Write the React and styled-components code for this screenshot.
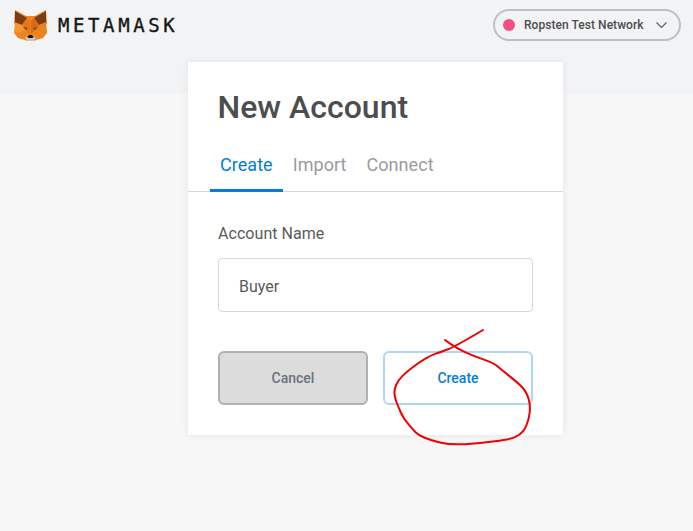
import React from "react";
import styled, { createGlobalStyle } from "styled-components";

const Global = createGlobalStyle`
  html, body { margin: 0; padding: 0; background: #f7f7f7; }
  body { font-family: Roboto, "Liberation Sans", sans-serif; }
  * { box-sizing: border-box; }
`;

const Page = styled.div`
  position: relative;
  width: 693px;
  height: 531px;
  overflow: hidden;
  background: #f7f7f7;
`;

const Header = styled.header`
  height: 94px;
  background: #f2f3f4;
  display: flex;
  align-items: flex-start;
  justify-content: space-between;
  padding: 9px 12px 0 14px;
`;

const Brand = styled.div`
  display: flex;
  align-items: center;
  gap: 11px;
  height: 32px;
`;

const Wordmark = styled.span`
  font-family: "DejaVu Sans Mono", monospace;
  font-size: 19px;
  letter-spacing: 3.6px;
  color: #161616;
  line-height: 1;
  -webkit-text-stroke: 0.35px #161616;
`;

const NetworkPill = styled.div`
  width: 188px;
  height: 32px;
  border: 2px solid #bbc0c5;
  border-radius: 16px;
  display: flex;
  align-items: center;
  padding: 0 12px 0 8px;
  color: #4d4d4d;
  font-size: 12px;
  letter-spacing: 0.05px;
  font-weight: 500;
`;

const Dot = styled.span`
  width: 12px;
  height: 12px;
  border-radius: 50%;
  background: ${(p) => p.$color};
  margin-right: 9px;
`;

const NetworkName = styled.span`
  flex: 1;
`;

const Main = styled.main`
  display: flex;
  margin-top: -32px;
  padding-left: 188px;
`;

const Card = styled.section`
  width: 375px;
  height: 373px;
  background: #fff;
  box-shadow: 0 0 7px rgba(0, 0, 0, 0.08);
  display: flex;
  flex-direction: column;
`;

const Title = styled.h1`
  margin: 0;
  padding: 27px 30px 0 29.5px;
  font-size: 32px;
  line-height: 36px;
  font-weight: 500;
  color: #4d4d4d;
`;

const Tabs = styled.nav`
  display: flex;
  padding: 0 22px;
  margin-top: 27px;
  height: 40px;
  border-bottom: 1px solid #d6d8da;
`;

const Tab = styled.div`
  padding: 0 10px;
  height: 40px;
  font-size: 18px;
  letter-spacing: 0.05px;
  line-height: 26px;
  color: ${(p) => (p.$active ? "#037dd6" : "#9b9b9b")};
  border-bottom: 3px solid ${(p) => (p.$active ? "#037dd6" : "transparent")};
`;

const Form = styled.form`
  display: flex;
  flex-direction: column;
  padding: 30px 30px 0;
`;

const Label = styled.label`
  font-size: 16px;
  letter-spacing: 0.05px;
  line-height: 24px;
  color: #5b5b5b;
`;

const NameField = styled.div`
  margin-top: 12px;
  height: 54px;
  border: 1px solid #d2d8dd;
  border-radius: 4px;
  padding: 2px 20px 0;
  display: flex;
  align-items: center;
  font-size: 16px;
  color: #5b5b5b;
`;

const Actions = styled.div`
  display: grid;
  grid-template-columns: 150px 150px;
  gap: 15px;
  margin-top: 39px;
`;

const Button = styled.button`
  height: 54px;
  border-radius: 6px;
  border: 2px solid ${(p) => (p.$primary ? "#b0d7f2" : "#b0b0b0")};
  background: ${(p) => (p.$primary ? "#fff" : "#dcdcdc")};
  color: ${(p) => (p.$primary ? "#037dd6" : "#6a737d")};
  font-family: Roboto, sans-serif;
  font-size: 14px;
  font-weight: 500;
  padding: 0;
`;

const Scribble = styled.svg`
  position: absolute;
  left: 0;
  top: 0;
  pointer-events: none;
`;

const Fox = () => (
  <svg width="33" height="31" viewBox="0 0 33 31" aria-hidden="true">
    <polygon points="1,0 12,6 21,6 32,0 33,13 31,17 33,23 29,28 22,30 20,31 13,31 11,30 4,28 0,23 2,17 0,13" fill="#f0831f" />
    <polygon points="1,1 13,8 8,15 1,12" fill="#763d16" />
    <polygon points="32,1 20,8 25,15 32,12" fill="#763d16" />
    <polygon points="13,8 16,11 16,24 13,21 8,15" fill="#e4761b" />
    <polygon points="20,8 17,11 17,24 20,21 25,15" fill="#d7691a" />
    <polygon points="1,13 8,15 11,20 4,23 0,22" fill="#f6962f" />
    <polygon points="32,13 25,15 22,20 29,23 33,22" fill="#e8821e" />
    <polygon points="9,17 14,18 12,20" fill="#6b4a2e" />
    <polygon points="24,17 19,18 21,20" fill="#6b4a2e" />
    <polygon points="11,28 14,25 19,25 22,28 20,31 13,31" fill="#d7c1b3" />
    <polygon points="13,27 15,25 18,25 20,27 18,28 15,28" fill="#161616" />
  </svg>
);

const Chevron = () => (
  <svg width="11" height="6" viewBox="0 0 11 6" aria-hidden="true">
    <path d="M0.5 0.5 L5.5 5.5 L10.5 0.5" fill="none" stroke="#59626b" strokeWidth="1.2" />
  </svg>
);

const SCRIBBLE = [
  [483, 330], [455, 346.7], [440, 352.3], [431.7, 355], [420, 361.7], [406.7, 371.7],
  [398.3, 380], [394, 390], [395, 398.3], [398.3, 406.7], [403.3, 418.3], [413.3, 430],
  [418.3, 435], [430, 440], [450, 445], [480, 443.3], [510, 439.3], [520, 435],
  [526.7, 426.7], [531, 408], [526.7, 391.7], [516.7, 381.7], [501.7, 370], [493.3, 362.7],
  [473.3, 356], [456.7, 348.3], [445, 340],
];

const scribblePath = SCRIBBLE.reduce((d, p, i) => {
  if (i === 0) return `M${p[0]} ${p[1]}`;
  if (i === SCRIBBLE.length - 1) return `${d} L${p[0]} ${p[1]}`;
  const n = SCRIBBLE[i + 1];
  return `${d} Q${p[0]} ${p[1]} ${(p[0] + n[0]) / 2} ${(p[1] + n[1]) / 2}`;
}, "");

export default function App() {
  return (
    <Page>
      <Global />
      <Header>
        <Brand>
          <Fox />
          <Wordmark>METAMASK</Wordmark>
        </Brand>
        <NetworkPill>
          <Dot $color="#f0527f" />
          <NetworkName>Ropsten Test Network</NetworkName>
          <Chevron />
        </NetworkPill>
      </Header>
      <Main>
        <Card>
          <Title>New Account</Title>
          <Tabs>
            <Tab $active>Create</Tab>
            <Tab>Import</Tab>
            <Tab>Connect</Tab>
          </Tabs>
          <Form>
            <Label>Account Name</Label>
            <NameField>Buyer</NameField>
            <Actions>
              <Button type="button">Cancel</Button>
              <Button type="button" $primary>Create</Button>
            </Actions>
          </Form>
        </Card>
      </Main>
      <Scribble width="693" height="531" viewBox="0 0 693 531" aria-hidden="true">
        <path
          d={scribblePath}
          fill="none"
          stroke="#f00000"
          strokeWidth="2"
          strokeLinecap="round"
          strokeLinejoin="round"
        />
      </Scribble>
    </Page>
  );
}
